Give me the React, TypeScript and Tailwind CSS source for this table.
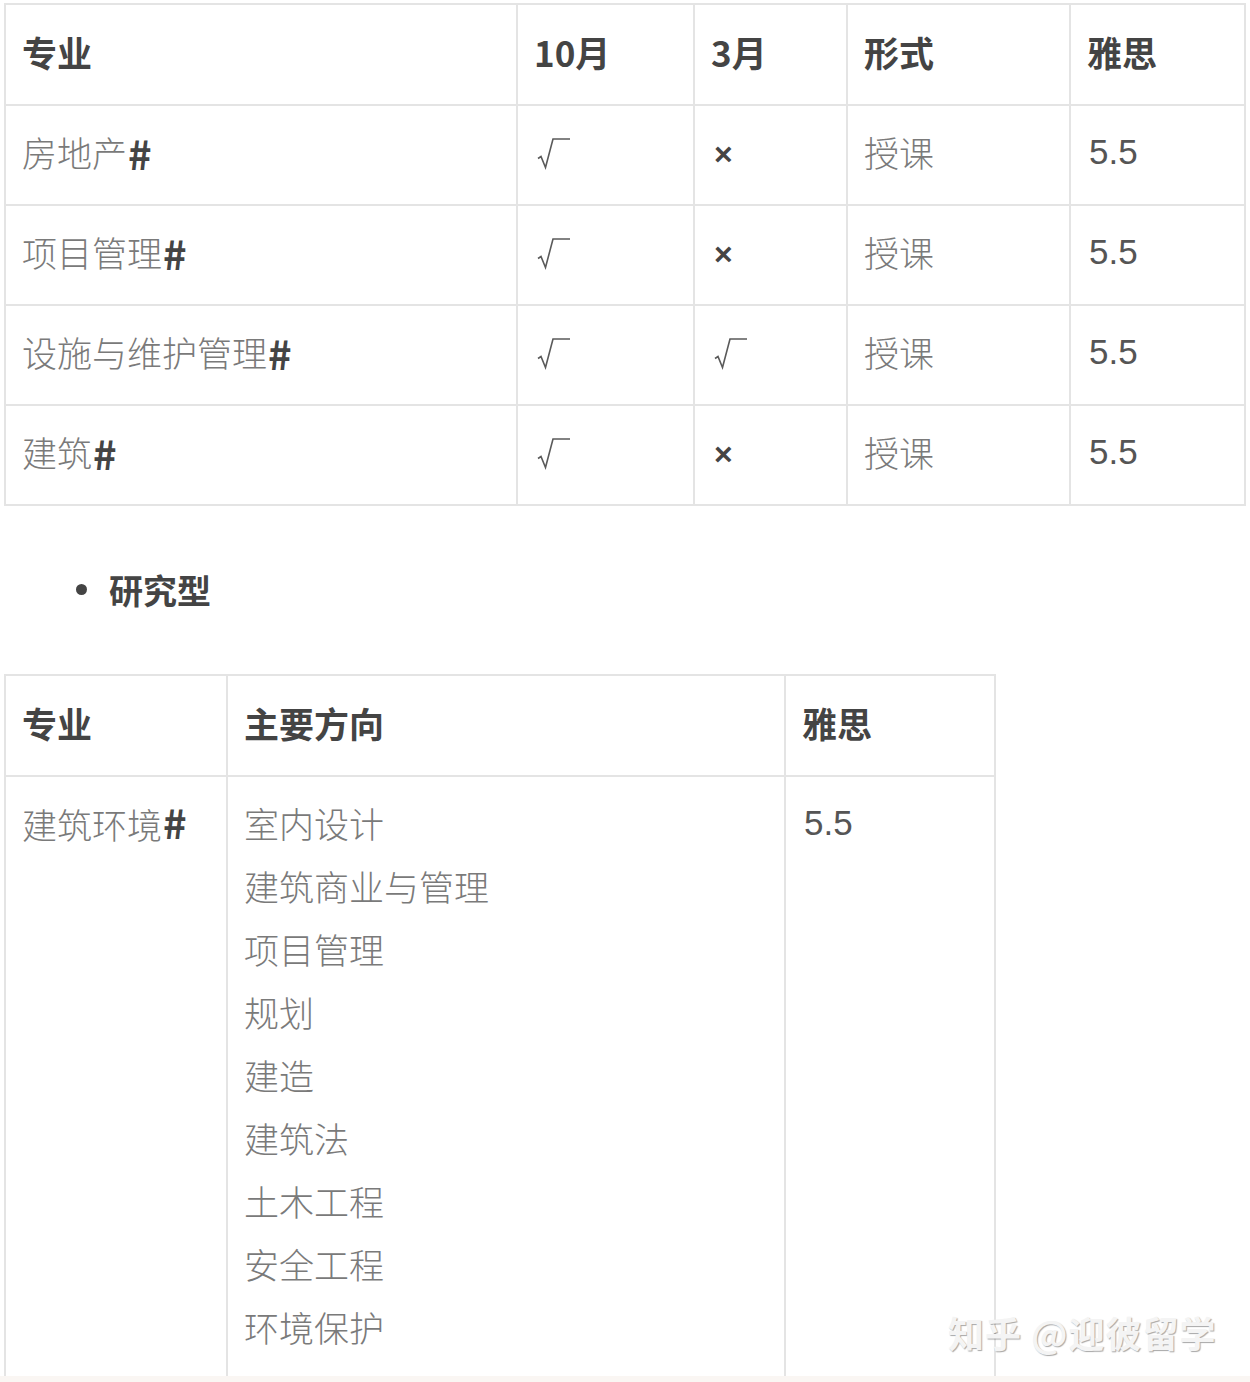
import React from 'react';

const FONT = "font-['Noto_Sans_CJK_SC','Noto_Sans',sans-serif]";
const NUM = "font-['Liberation_Sans','Noto_Sans_CJK_SC',sans-serif]";

type Mark = 'yes' | 'no';

interface TaughtRow {
  name: string;
  oct: Mark;
  mar: Mark;
  mode: string;
  ielts: string;
}

const taught: TaughtRow[] = [
  { name: '房地产', oct: 'yes', mar: 'no', mode: '授课', ielts: '5.5' },
  { name: '项目管理', oct: 'yes', mar: 'no', mode: '授课', ielts: '5.5' },
  { name: '设施与维护管理', oct: 'yes', mar: 'yes', mode: '授课', ielts: '5.5' },
  { name: '建筑', oct: 'yes', mar: 'no', mode: '授课', ielts: '5.5' },
];

const directions = ['室内设计', '建筑商业与管理', '项目管理', '规划', '建造', '建筑法', '土木工程', '安全工程', '环境保护'];

function Check() {
  return (
    <svg width="34" height="33" viewBox="0 0 34 33" fill="none" className="ml-[3px] mt-[2px]">
      <path d="M1 21.5 L4 19.5 L8.5 30.5 L16 2 L33 2" stroke="#5a5a5a" strokeWidth="1.6" strokeLinejoin="miter" />
    </svg>
  );
}

function MarkCell({ mark }: { mark: Mark }) {
  if (mark === 'yes') return <Check />;
  return <span className={`${NUM} ml-[3px] mt-[3px] text-[32px] font-bold text-[#444]`}>×</span>;
}

const cell = 'border-r-2 border-b-2 border-[#e4e4e4] pl-4 pb-[5px] flex items-center';
const head = 'text-[35px] font-bold text-[#444]';
const hash = 'text-[40px] font-bold text-[#444] ml-[1px]';
const body = 'text-[35px] font-light text-[#7a7a7a]';

export default function App() {
  return (
    <div className={`${FONT} bg-white w-[1250px]`}>
      <div className="relative h-[1376px] overflow-hidden pt-[3px] pl-[4px]">
        {/* 授课型 */}
        <div className="grid grid-cols-[512px_177px_153px_223px_175px] w-fit border-l-2 border-t-2 border-[#e4e4e4]">
          <div className={`${cell} h-[101px]`}><span className={head}>专业</span></div>
          <div className={`${cell} h-[101px]`}><span className={head}>10月</span></div>
          <div className={`${cell} h-[101px]`}><span className={head}>3月</span></div>
          <div className={`${cell} h-[101px]`}><span className={head}>形式</span></div>
          <div className={`${cell} h-[101px]`}><span className={head}>雅思</span></div>
          {taught.map((row) => (
            <React.Fragment key={row.name}>
              <div className={`${cell} h-[100px]`}>
                <span className={body}>{row.name}</span>
                <span className={hash}>#</span>
              </div>
              <div className={`${cell} h-[100px]`}><MarkCell mark={row.oct} /></div>
              <div className={`${cell} h-[100px]`}><MarkCell mark={row.mar} /></div>
              <div className={`${cell} h-[100px]`}><span className={body}>{row.mode}</span></div>
              <div className={`${cell} h-[100px]`}>
                <span className={`${NUM} ml-[2px] text-[35px] text-[#555]`}>{row.ielts}</span>
              </div>
            </React.Fragment>
          ))}
        </div>

        {/* 研究型 */}
        <div className="flex items-center h-[168px] pl-[72px] pb-[2px]">
          <span className="w-[11px] h-[11px] rounded-full bg-[#444] mr-[22px]" />
          <span className="text-[34px] font-bold text-[#444]">研究型</span>
        </div>

        <div className="grid grid-cols-[222px_558px_210px] w-fit border-l-2 border-t-2 border-[#e4e4e4]">
          <div className={`${cell} h-[101px]`}><span className={head}>专业</span></div>
          <div className={`${cell} h-[101px]`}><span className={head}>主要方向</span></div>
          <div className={`${cell} h-[101px]`}><span className={head}>雅思</span></div>
          <div className="border-r-2 border-[#e4e4e4] pl-4 pt-[14px] h-[700px]">
            <div className="leading-[63px]">
              <span className={body}>建筑环境</span>
              <span className={hash}>#</span>
            </div>
          </div>
          <div className="border-r-2 border-[#e4e4e4] pl-4 pt-[14px] h-[700px]">
            {directions.map((d) => (
              <div key={d} className={`${body} leading-[63px]`}>{d}</div>
            ))}
          </div>
          <div className="border-r-2 border-[#e4e4e4] pl-4 pt-[14px] h-[700px]">
            <div className={`${NUM} ml-[2px] text-[35px] text-[#555] leading-[63px]`}>5.5</div>
          </div>
        </div>

        {/* watermark */}
        <div className="absolute left-[948px] top-[1305px] text-[36px] font-bold text-[#f4f4f4] tracking-[1px] [text-shadow:1px_1px_1px_rgba(0,0,0,0.35)]">
          知乎 @迎彼留学
        </div>
      </div>
      <div className="h-[6px] bg-[#faf6f3]" />
    </div>
  );
}
